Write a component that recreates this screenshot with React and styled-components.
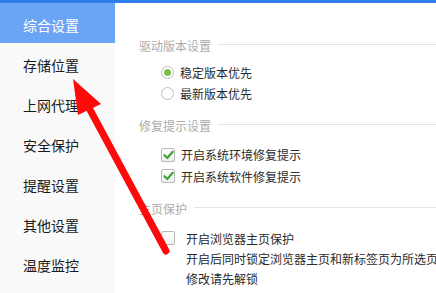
import React from "react";
import styled, { createGlobalStyle } from "styled-components";

const Global = createGlobalStyle`
  html, body { margin: 0; padding: 0; background: #fff; }
  body { font-family: "Noto Sans CJK SC", "Noto Sans", sans-serif; overflow: hidden; }
  * { box-sizing: border-box; }
`;

const Page = styled.div`
  position: relative;
  width: 436px;
  height: 293px;
  overflow: hidden;
  display: flex;
  flex-direction: column;
`;

const TopBar = styled.div`
  height: 3px;
  background: #2e7de9;
  flex: none;
`;

const Body = styled.div`
  flex: 1;
  display: flex;
  min-height: 0;
`;

const Sidebar = styled.nav`
  width: 115px;
  flex: none;
  background: #f9f9f9;
  display: flex;
  flex-direction: column;
`;

const NavItem = styled.div`
  height: 40px;
  padding: 4px 0 0 23px;
  line-height: 36px;
  font-size: 14px;
  color: ${(p) => (p.$active ? "#ffffff" : "#1a1a1a")};
  background: ${(p) => (p.$active ? "#6aa4f5" : "transparent")};
  white-space: nowrap;
`;

const Content = styled.main`
  flex: 1;
  padding: 35px 0 0 24px;
  display: flex;
  flex-direction: column;
  min-width: 0;
`;

const Section = styled.section`
  display: flex;
  flex-direction: column;
  margin-bottom: 14px;
`;

const Header = styled.div`
  display: flex;
  align-items: center;
  height: 16px;
  font-size: 12px;
  line-height: 16px;
  color: #acacac;
  white-space: nowrap;
`;

const HeaderLine = styled.div`
  flex: 1;
  height: 1px;
  background: #e4e4e4;
  margin: 0 0 4px 7px;
`;

const Options = styled.div`
  display: flex;
  flex-direction: column;
  padding: ${(p) => p.$top}px 0 0 21px;
`;

const Row = styled.label`
  display: flex;
  align-items: center;
  height: ${(p) => p.$h || 22}px;
  font-size: 12px;
  color: #2a2a2a;
  white-space: nowrap;
`;

const Radio = styled.span`
  width: 13px;
  height: 13px;
  border-radius: 50%;
  border: 1px solid #bdbdbd;
  background: #fff;
  margin: 0 6px 0 1px;
  display: flex;
  align-items: center;
  justify-content: center;
  flex: none;
  &::after {
    content: "";
    width: 7px;
    height: 7px;
    border-radius: 50%;
    background: ${(p) => (p.$checked ? "#7cc143" : "transparent")};
  }
`;

const Box = styled.span`
  width: 14px;
  height: 14px;
  border: 1px solid #b9b9b9;
  border-radius: 2px;
  background: linear-gradient(#ffffff, #f0f0f0);
  margin: 0 ${(p) => p.$gap || 6}px 0 1px;
  flex: none;
  display: flex;
  align-items: center;
  justify-content: center;
`;

const Desc = styled.div`
  padding-left: 26px;
  font-size: 12px;
  line-height: 20px;
  color: #2a2a2a;
  white-space: nowrap;
`;

const Overlay = styled.svg`
  position: absolute;
  left: 0;
  top: 0;
  pointer-events: none;
`;

const Check = () => (
  <svg width="11" height="10" viewBox="0 0 11 10">
    <path d="M1.5 5.2 L4.3 8 L9.7 1.8" fill="none" stroke="#3fa535" strokeWidth="2.2" strokeLinecap="round" strokeLinejoin="round" />
  </svg>
);

const navItems = ["综合设置", "存储位置", "上网代理", "安全保护", "提醒设置", "其他设置", "温度监控"];

export default function App() {
  return (
    <>
      <Global />
      <Page>
        <TopBar />
        <Body>
          <Sidebar>
            {navItems.map((t, i) => (
              <NavItem key={t} $active={i === 0}>{t}</NavItem>
            ))}
          </Sidebar>
          <Content>
            <Section>
              <Header>驱动版本设置<HeaderLine /></Header>
              <Options $top={8}>
                <Row $h={21}><Radio $checked />稳定版本优先</Row>
                <Row $h={21}><Radio />最新版本优先</Row>
              </Options>
            </Section>
            <Section>
              <Header>修复提示设置<HeaderLine /></Header>
              <Options $top={10}>
                <Row $h={21.5}><Box><Check /></Box>开启系统环境修复提示</Row>
                <Row $h={21.5}><Box><Check /></Box>开启系统软件修复提示</Row>
              </Options>
            </Section>
            <Section>
              <Header>主页保护<HeaderLine /></Header>
              <Options $top={10}>
                <Row $h={22}><Box $gap={11} />开启浏览器主页保护</Row>
                <Desc>开启后同时锁定浏览器主页和新标签页为所选页，</Desc>
                <Desc>修改请先解锁</Desc>
              </Options>
            </Section>
          </Content>
        </Body>
        <Overlay width="436" height="293" viewBox="0 0 436 293">
          <line x1="88" y1="106" x2="166" y2="251" stroke="#ff0a0a" strokeWidth="7" strokeLinecap="round" />
          <polygon points="73,79 78,115 101,104" fill="#ff0a0a" />
        </Overlay>
      </Page>
    </>
  );
}
